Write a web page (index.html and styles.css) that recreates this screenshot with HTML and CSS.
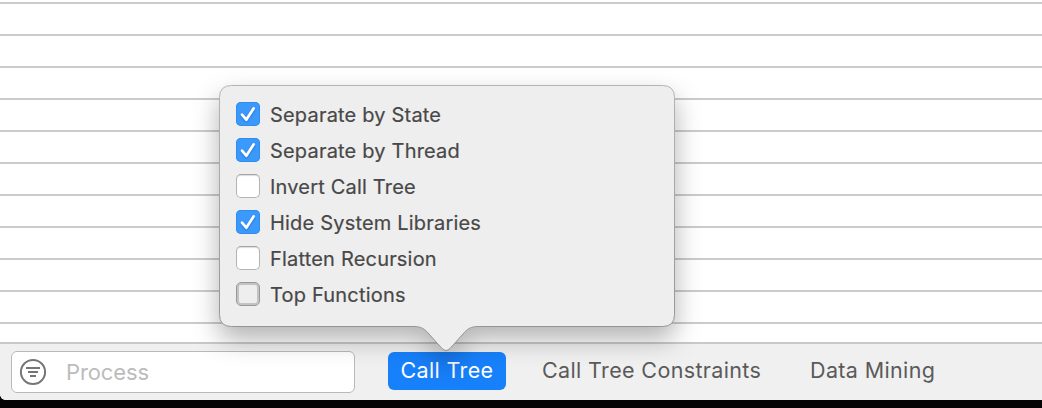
FILE: index.html
```html
<!DOCTYPE html>
<html lang="en">
<head>
<meta charset="utf-8">
<title>Call Tree</title>
<link rel="stylesheet" href="styles.css">
</head>
<body>
<main class="window">
  <div class="rows"></div>
  <footer class="toolbar">
    <div class="filter">
      <svg class="filter-icon" width="28" height="28" viewBox="0 0 28 28" fill="none" stroke="#757575" stroke-width="2">
        <circle cx="14" cy="14" r="12.1"/>
        <path d="M7 10H21M9 14H19M11 18H17"/>
      </svg>
      <span class="placeholder">Process</span>
    </div>
    <nav class="tabs">
      <button class="tab active"><span>Call Tree</span></button>
      <button class="tab constraints"><span>Call Tree Constraints</span></button>
      <button class="tab mining"><span>Data Mining</span></button>
    </nav>
  </footer>
</main>
<section class="popover">
  <svg class="bubble" width="456" height="268" viewBox="0 0 456 268">
    <defs>
      <linearGradient id="edge" x1="0" y1="0" x2="0" y2="1">
        <stop offset="0" stop-color="#b4b4b4"/>
        <stop offset="0.88" stop-color="#979797"/>
        <stop offset="1" stop-color="#8f8f8f"/>
      </linearGradient>
    </defs>
    <path d="M12.5 .5H443.5Q455.5 .5 455.5 12.5V229.500Q455.500 241.500 443.500 241.500H259C252 241.500 248 244 244 249L231 263.500Q227 267.500 223 263.500L210 249C206 244 202 241.500 195 241.500H12.500Q.5 241.500 .5 229.500V12.500Q.5 .5 12.500 .5Z" fill="#eee" stroke="url(#edge)"/>
  </svg>
  <ul class="options">
    <li><span class="box on"><svg width="24" height="24" viewBox="0 0 24 24"><path d="M6 12.600L10.300 17.700L17.700 6.300"/></svg></span><span class="label">Separate by State</span></li>
    <li><span class="box on"><svg width="24" height="24" viewBox="0 0 24 24"><path d="M6 12.600L10.300 17.700L17.700 6.300"/></svg></span><span class="label">Separate by Thread</span></li>
    <li><span class="box"></span><span class="label">Invert Call Tree</span></li>
    <li><span class="box on"><svg width="24" height="24" viewBox="0 0 24 24"><path d="M6 12.600L10.300 17.700L17.700 6.300"/></svg></span><span class="label">Hide System Libraries</span></li>
    <li><span class="box"></span><span class="label">Flatten Recursion</span></li>
    <li><span class="box pressed"></span><span class="label">Top Functions</span></li>
  </ul>
</section>
</body>
</html>
```
FILE: styles.css
```css
* { box-sizing: border-box; }
body {
  margin: 0;
  height: 408px;
  overflow: hidden;
  background: #060404;
  font-family: Inter, "Liberation Sans", sans-serif;
}
.window {
  display: flex;
  flex-direction: column;
  height: 400px;
  overflow: hidden;
  border-bottom-left-radius: 6px;
  background: #fff;
}
.rows {
  flex: 1;
  background: repeating-linear-gradient(#fff 0 2px, #cbcbcb 2px 4px, #fff 4px 32px);
}
.toolbar {
  display: flex;
  align-items: flex-start;
  height: 58px;
  padding: 7px 0 0 11px;
  border-top: 2px solid #c9c9c9;
  background: #f0f0f0;
}
.filter {
  display: flex;
  align-items: center;
  gap: 19px;
  width: 344px;
  height: 42px;
  padding-left: 7px;
  border: 1px solid #b9b9b9;
  border-radius: 6px;
  background: #fff;
}
.placeholder { color: #bcbcbc; font-size: 22px; letter-spacing: -0.1px; }
.tabs { display: flex; padding: 1px 0 0 33px; }
.tab {
  height: 38px;
  padding: 0 0 1px;
  border: 0;
  background: none;
  color: #5a5a5a;
  font: 21.5px/37px Inter, "Liberation Sans", sans-serif;
  letter-spacing: 0.36px;
  text-align: left;
  white-space: nowrap;
}
.active { width: 118px; padding-left: 12.5px; border-radius: 6px; background: #1780fb; color: #fff; }
.constraints { width: 268px; margin-left: 36px; }
.mining { width: 130px; }
.popover { position: absolute; left: 219px; top: 85px; width: 456px; height: 268px; }
.bubble {
  position: absolute;
  inset: 0;
  overflow: visible;
  filter: drop-shadow(0 12px 13px rgba(0, 0, 0, 0.3));
}
.options {
  position: relative;
  display: flex;
  flex-direction: column;
  gap: 12px;
  margin: 0;
  padding: 17px 0 0 17px;
  list-style: none;
}
.options li { display: flex; align-items: center; gap: 10px; height: 24px; }
.box {
  width: 24px;
  height: 24px;
  border: 1px solid #b4b4b4;
  border-top-color: #a5a5a5;
  border-radius: 5px;
  background: #fff;
  box-shadow: inset 0 1px 1px #ddd;
}
.box.on { border: 0; background: #3b99fc; box-shadow: inset 0 0 0 1px #2f8df0; }
.box svg {
  display: block;
  fill: none;
  stroke: #fff;
  stroke-width: 2.7;
  stroke-linecap: round;
  stroke-linejoin: round;
  filter: drop-shadow(0 1px 1px rgba(0, 50, 130, 0.35));
}
.box.pressed { border-color: #999; background: #eee; box-shadow: inset 0 0 0 2px #c3c3c3; }
.label {
  padding-top: 1px;
  color: #484848;
  font-size: 20px;
  line-height: 24px;
  letter-spacing: 0.19px;
  -webkit-text-stroke: 0.2px #484848;
  white-space: nowrap;
}
```
